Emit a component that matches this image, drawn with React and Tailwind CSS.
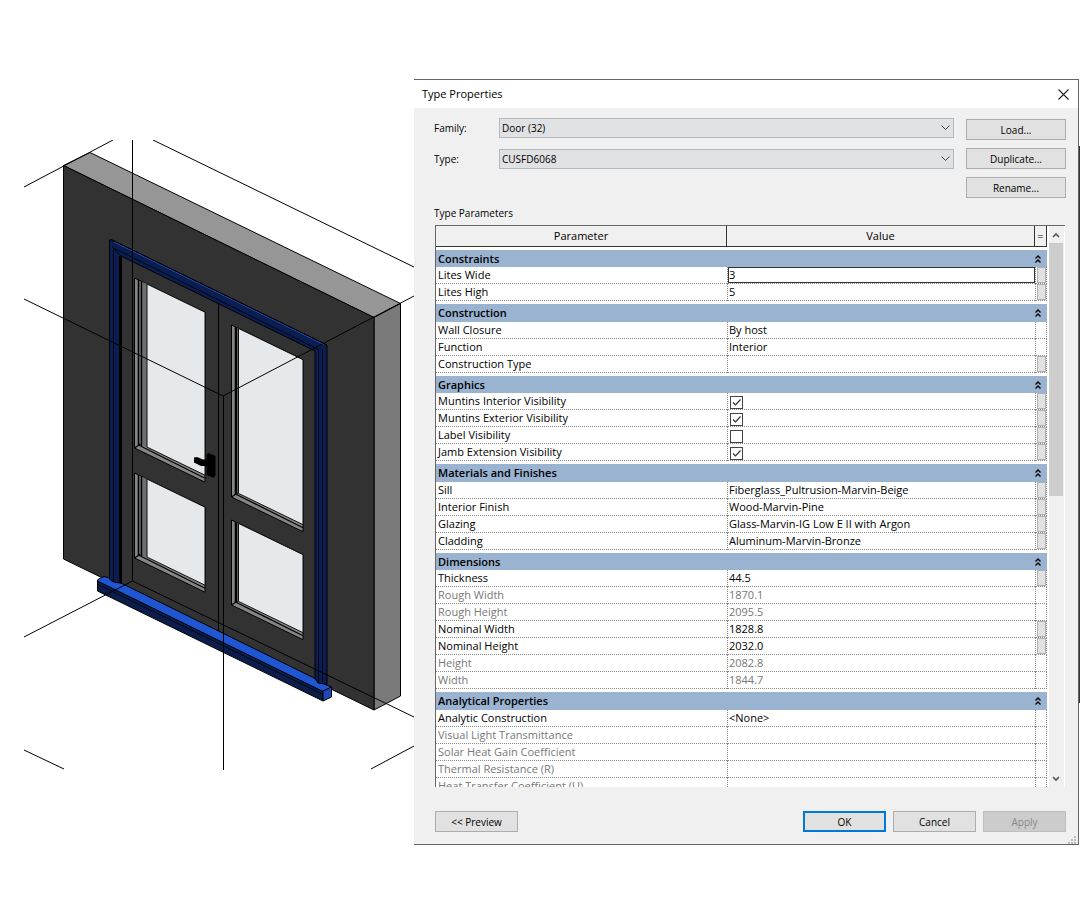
import React, { useState } from 'react';

const SECTIONS = [
  {
    title: 'Constraints',
    tight: true,
    rows: [
      { name: 'Lites Wide', value: '3', link: true, active: true },
      { name: 'Lites High', value: '5', link: true },
    ],
  },
  {
    title: 'Construction',
    rows: [
      { name: 'Wall Closure', value: 'By host' },
      { name: 'Function', value: 'Interior' },
      { name: 'Construction Type', value: '', link: true },
    ],
  },
  {
    title: 'Graphics',
    tight: true,
    rows: [
      { name: 'Muntins Interior Visibility', check: true, link: true },
      { name: 'Muntins Exterior Visibility', check: true, link: true },
      { name: 'Label Visibility', check: false, link: true },
      { name: 'Jamb Extension Visibility', check: true, link: true },
    ],
  },
  {
    title: 'Materials and Finishes',
    rows: [
      { name: 'Sill', value: 'Fiberglass_Pultrusion-Marvin-Beige', link: true },
      { name: 'Interior Finish', value: 'Wood-Marvin-Pine', link: true },
      { name: 'Glazing', value: 'Glass-Marvin-IG Low E II with Argon', link: true },
      { name: 'Cladding', value: 'Aluminum-Marvin-Bronze', link: true },
    ],
  },
  {
    title: 'Dimensions',
    tight: true,
    rows: [
      { name: 'Thickness', value: '44.5', link: true },
      { name: 'Rough Width', value: '1870.1', locked: true },
      { name: 'Rough Height', value: '2095.5', locked: true },
      { name: 'Nominal Width', value: '1828.8', link: true },
      { name: 'Nominal Height', value: '2032.0', link: true },
      { name: 'Height', value: '2082.8', locked: true },
      { name: 'Width', value: '1844.7', locked: true },
    ],
  },
  {
    title: 'Analytical Properties',
    rows: [
      { name: 'Analytic Construction', value: '<None>' },
      { name: 'Visual Light Transmittance', value: '', locked: true },
      { name: 'Solar Heat Gain Coefficient', value: '', locked: true },
      { name: 'Thermal Resistance (R)', value: '', locked: true },
      { name: 'Heat Transfer Coefficient (U)', value: '', locked: true },
    ],
  },
];

// Glass pane with its stops: x/y of the top left corner, r is the right edge
const Pane = ({ x, r, top, bottom, inset }) => {
  const drop = (r - x) * 0.485;
  const gx = x + inset;
  const gTop = top + inset * 0.485;
  const gBottom = bottom - 1;
  return (
    <g>
      <polygon
        points={`${x},${top} ${r},${top + drop} ${r},${bottom + drop} ${x},${bottom}`}
        fill="#858585"
        stroke="#000"
      />
      <polygon
        points={`${x + 3},${top + 2} ${gx},${gTop} ${gx},${gBottom} ${x + 3},${bottom - 3}`}
        fill="#697175"
      />
      <path
        d={`M${x + 4} ${top + 2}V${bottom - 3}M${inset > 10 ? x + 7 : x + 5} ${top + 3}V${bottom - 2}`}
        stroke="#000"
        strokeWidth="1.4"
      />
      <polygon
        points={`${gx},${gTop} ${r},${top + drop} ${r},${bottom + drop - 7} ${gx},${bottom - 7 + inset * 0.485}`}
        fill="#e5e9ec"
        stroke="#111"
      />
      <path
        d={`M${x + 4} ${bottom - 3}L${r} ${bottom + drop - 4}M${x} ${bottom}L${x + 6} ${bottom - 4}`}
        stroke="#000"
        strokeWidth="1.2"
      />
    </g>
  );
};

const DoorPreview = () => (
  <svg
    viewBox="24 140 390 630"
    className="block w-[390px] shrink-0 ml-6 mt-[61px]"
    fill="none"
    strokeWidth="1"
    role="img"
    aria-label="Door preview"
  >
    {/* Wall */}
    <g stroke="#000" strokeLinejoin="round">
      <polygon points="63.5,165.5 90,152.5 400.5,303.5 374,317.5" fill="#969696" />
      <polygon points="374,317.5 400.5,303.5 400.5,696 374,710" fill="#7a7a7a" />
      <polygon points="63.5,165.5 374,317.5 374,710 63.5,559" fill="#323232" />
    </g>

    {/* Frame */}
    <polygon points="109.5,240 111,239.5 327,345 327,687 315,682 315,351 121,256 121,584 109.5,583" fill="#0c1e50" stroke="#000" />
    <path d="M120.500 256V584" stroke="#000" strokeWidth="3" />
    <path d="M113.500 248V583M113.500 248L318.500 349.500V682M112 247L122 257M322.500 349V682" stroke="#020718" strokeWidth="1" />
    <path d="M114 242L324 344.500" stroke="#2450c0" strokeWidth="1" />
    <path d="M111 239.500L327 345" stroke="#000" strokeWidth="1" />
    <path d="M218.500 304V631M223.500 396V634" stroke="#000" />

    {/* Glass */}
    <Pane x={134.5} r={205} top={278} bottom={448} inset={12.5} />
    <Pane x={134.5} r={205} top={473} bottom={558} inset={12.5} />
    <Pane x={231.5} r={303} top={325} bottom={497} inset={7} />
    <Pane x={231.5} r={303} top={520} bottom={605} inset={7} />

    {/* Handle */}
    <path d="M206.500 454L208.500 453L215.500 456V475.500L213.500 478L206.500 475V466H201L194 462.500V457.500L197 457L203 459.500H206.500Z" fill="#000" />

    {/* Sill */}
    <g stroke="#000" strokeWidth="1" strokeLinejoin="round">
      <polygon points="97.5,580 323,691 323,701 97.5,591" fill="#0c1d4b" />
      <path d="M97.500 581L98.500 579L104 576.500L108 577.500L112 581.500L122 583.500L315 678.500L318 683L324 684L331.500 687L323 691.500Z" fill="#2156d2" />
      <polygon points="323,691 331.5,687 331.5,697 323,701" fill="#1d48b5" />
      <path d="M98 584.500L323 694.500" strokeWidth="0.7" />
    </g>

    {/* Reference planes */}
    <path
      d="M24 187L113 140M153 140L414 267M132.500 140V581M24 299L223 396L414 296M223.500 396V770M24 637L132.500 581L414 717M24 750L64 769M371 769L414 746"
      stroke="#000"
    />
  </svg>
);

const Picker = ({ id, label, value }) => (
  <div className="flex items-center">
    <label htmlFor={id} className="w-[65px] shrink-0">{label}</label>
    <div className="grid flex-1 items-center">
      <select
        id={id}
        defaultValue={value}
        className="col-start-1 row-start-1 h-5 w-full appearance-none border border-[#b5b8bc] bg-[#e0e1e3] pl-[2px] leading-4"
      >
        <option>{value}</option>
      </select>
      <svg className="pointer-events-none col-start-1 row-start-1 mr-1 justify-self-end" width="9" height="6" fill="none" stroke="#444">
        <path d="M0.500 0.500L4.500 4.500L8.500 0.500" />
      </svg>
    </div>
  </div>
);

const Button = ({ children, className = 'border-[#adadad] bg-[#e1e1e1]', wide, ...rest }) => (
  <button type="button" className={`h-[21px] border text-center leading-4 ${wide ? 'w-[100px]' : 'w-[83px]'} ${className}`} {...rest}>
    {children}
  </button>
);

const Row = ({ row }) => {
  const [value, setValue] = useState(row.value);
  const [checked, setChecked] = useState(row.check);
  const isCheck = row.check !== undefined;
  const tone = row.locked ? 'text-[#777]' : 'text-black';

  return (
    <tr className={tone}>
      <td className="h-[17px] border-b border-dotted border-[#888] p-0 pl-[2px] whitespace-nowrap">{row.name}</td>
      <td className="h-[17px] border-b border-l border-dotted border-[#888] p-0">
        {isCheck ? (
          <div className="grid h-4 items-center justify-start pl-[2px]">
            <input
              type="checkbox"
              aria-label={row.name}
              checked={checked}
              onChange={(e) => setChecked(e.target.checked)}
              className="col-start-1 row-start-1 mt-[2px] h-[13px] w-[13px] appearance-none border border-[#444] bg-white"
            />
            {checked && (
              <svg className="pointer-events-none col-start-1 row-start-1 mt-[2px]" width="13" height="13" fill="none" stroke="#333" strokeWidth="1.2">
                <path d="M3 6.500L5.500 9L10.500 3.500" />
              </svg>
            )}
          </div>
        ) : (
          <input
            type="text"
            aria-label={row.name}
            value={value}
            disabled={row.locked}
            onChange={(e) => setValue(e.target.value)}
            className={`block h-4 w-full bg-transparent leading-4 outline-none ${row.active ? 'border border-[#333] pl-0' : 'pl-px'}`}
          />
        )}
      </td>
      <td className="h-[17px] border-r border-b border-l border-dotted border-[#888] p-0">
        {row.link && (
          <button type="button" aria-label={`Associate ${row.name}`} className="mx-auto block h-4 w-[9px] border border-[#b0b0b0] bg-[#e1e1e1]" />
        )}
      </td>
    </tr>
  );
};

const ParameterTable = () => (
  <div className="flex h-[562px] border-t border-l border-[#666] bg-white">
    <div className="flex-1 overflow-hidden">
      <table className="w-full table-fixed border-separate border-spacing-0 text-left text-[11px] leading-4">
        <thead>
          <tr className="bg-[#f0f0f0] text-center">
            <th className="h-[21px] border-r border-b border-[#333] p-0 font-normal">Parameter</th>
            <th className="h-[21px] w-[308px] border-r border-b border-[#333] p-0 font-normal">Value</th>
            <th className="h-[21px] w-3 border-r border-b border-[#333] p-0 font-normal">=</th>
          </tr>
        </thead>
        {SECTIONS.map((section) => (
          <tbody key={section.title}>
            <tr>
              <th
                colSpan={3}
                className={`border-t-[3px] border-white bg-[#9ab3d0] p-0 pl-[2px] font-semibold text-black ${section.tight ? 'h-5' : 'h-[21px]'}`}
              >
                <div className="flex items-center justify-between pr-[6px]">
                  {section.title}
                  <svg width="6" height="8" fill="none" stroke="#000" strokeWidth="1.4">
                    <path d="M0.500 3.500L3 1L5.500 3.500M0.500 7.500L3 5L5.500 7.500" />
                  </svg>
                </div>
              </th>
            </tr>
            {section.rows.map((row) => (
              <Row key={row.name} row={row} />
            ))}
          </tbody>
        ))}
      </table>
    </div>

    {/* Scroll bar */}
    <div className="ml-[2px] flex w-4 flex-col border-r border-white bg-[#f0f0f0]">
      <button type="button" aria-label="Scroll up" className="flex h-[17px] w-[14px] shrink-0 items-center justify-center">
        <svg width="8" height="6" fill="none" stroke="#555" strokeWidth="1.6">
          <path d="M1 5L4 2L7 5" />
        </svg>
      </button>
      <div className="flex w-full flex-1 flex-col">
        <div className="h-[48%] w-[14px] bg-[#cdcdcd]" />
      </div>
      <button type="button" aria-label="Scroll down" className="flex h-[17px] w-[14px] shrink-0 items-center justify-center">
        <svg width="8" height="6" fill="none" stroke="#555" strokeWidth="1.6">
          <path d="M1 1L4 4L7 1" />
        </svg>
      </button>
    </div>
  </div>
);

const TypeProperties = () => (
  <section className="flex-1 border-t border-r border-b border-[#666] bg-[#f0f0f0] text-[10px] leading-4 text-black">
    <header className="flex h-7 items-center justify-between bg-white pr-[9px] pl-2">
      <h1 className="text-[11px]">Type Properties</h1>
      <button type="button" aria-label="Close">
        <svg width="11" height="11" fill="none" stroke="#222" strokeWidth="1.1">
          <path d="M0.500 0.500L10.500 10.500M10.500 0.500L0.500 10.500" />
        </svg>
      </button>
    </header>

    <div className="pt-[10px] pr-3 pl-5">
      <div className="flex gap-3">
        <div className="flex flex-1 flex-col gap-[11px]">
          <Picker id="family" label="Family:" value="Door (32)" />
          <Picker id="type" label="Type:" value="CUSFD6068" />
        </div>
        <div className="flex flex-col gap-2 pt-px">
          <Button wide>Load...</Button>
          <Button wide>Duplicate...</Button>
          <Button wide>Rename...</Button>
        </div>
      </div>

      <h2 className="mt-[7px] mb-1">Type Parameters</h2>
      <div className="px-px">
        <ParameterTable />
      </div>

      <footer className="mt-6 flex items-center gap-[7px] pl-px">
        <Button className="mr-auto border-[#adadad] bg-[#e1e1e1]">&lt;&lt; Preview</Button>
        <Button className="border-[#0078d7] bg-[#e1e1e1] outline outline-1 -outline-offset-2 outline-[#0078d7]">OK</Button>
        <Button>Cancel</Button>
        <Button disabled className="border-[#bfbfbf] bg-[#cccccc] text-[#888]">Apply</Button>
      </footer>
    </div>

    <div className="flex h-3 items-end justify-end pr-[2px]">
      <svg width="8" height="8" fill="#bbb">
        <path d="M6 0h2v2h-2zM3 3h2v2h-2zM6 3h2v2h-2zM0 6h2v2h-2zM3 6h2v2h-2zM6 6h2v2h-2z" />
      </svg>
    </div>
  </section>
);

export default function App() {
  return (
    <main className="flex min-h-screen items-start bg-white pt-[79px] font-['Open_Sans','Noto_Sans',sans-serif]">
      <DoorPreview />
      <TypeProperties />
      <div className="mt-[67px] h-[557px] w-px bg-[#333]" />
    </main>
  );
}
